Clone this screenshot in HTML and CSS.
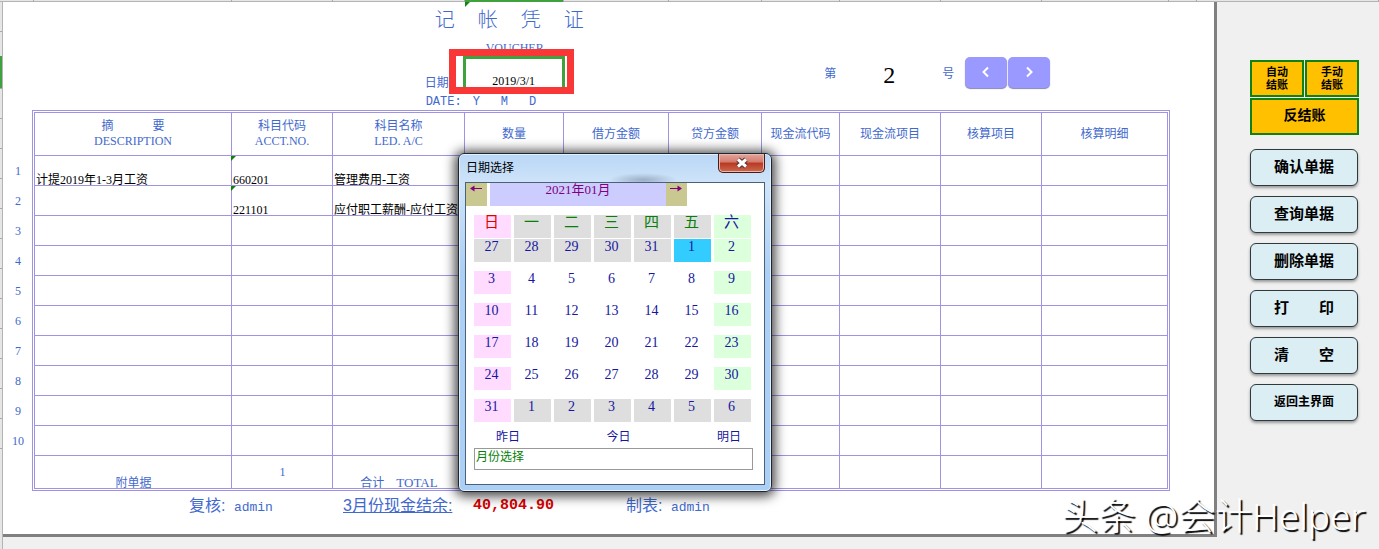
FILE: index.html
```
<!DOCTYPE html>
<html lang="zh-CN">
<head>
<meta charset="utf-8">
<title>记帐凭证</title>
<link rel="stylesheet" href="styles.css">
</head>
<body>
<div class="colstrip"><i class="c1"></i><i class="c2"></i><i class="c3"></i><i class="c4"></i><i class="c5 active"></i><i class="c6"></i><i class="c7"></i><i class="c8"></i><i class="c9"></i><i class="c10"></i><i class="c11"></i><i class="c12"></i><i class="c13"></i></div>
<div class="workspace">
  <div class="rowstrip"><i></i><i></i><i class="active"></i><i></i><i></i><i></i><i></i><i></i><i></i><i></i><i></i><i></i><i></i><i></i><i></i></div>
  <main class="sheet">
    <header class="head">
      <div class="title-block">
        <h1 class="title"><span>记</span><span>帐</span><span>凭</span><span>证</span></h1>
        <div class="subtitle">VOUCHER</div>
        <div class="date-row">
          <label for="vdate">日期</label>
          <div class="red-frame"><input id="vdate" class="date-input" type="text" value="2019/3/1"></div>
        </div>
        <div class="date-parts"><span>DATE:</span><span>Y</span><span>M</span><span>D</span></div>
      </div>
      <div class="number-nav">
        <span>第</span><span class="number">2</span><span class="hao">号</span>
        <button class="nav" aria-label="上一张"><svg viewBox="0 0 8 12" width="8" height="12"><path d="M6 1.5 1.5 6 6 10.5"/></svg></button>
        <button class="nav" aria-label="下一张"><svg viewBox="0 0 8 12" width="8" height="12"><path d="M2 1.5 6.5 6 2 10.5"/></svg></button>
      </div>
    </header>
    <div class="ledger">
      <ol class="rownums"><li>1</li><li>2</li><li>3</li><li>4</li><li>5</li><li>6</li><li>7</li><li>8</li><li>9</li><li>10</li></ol>
      <div class="frame">
        <table class="grid">
          <colgroup><col class="w-desc"><col class="w-acct"><col class="w-name"><col class="w-qty"><col class="w-debit"><col class="w-credit"><col class="w-cfcode"><col class="w-cfitem"><col class="w-item"><col></colgroup>
          <thead><tr>
            <th><span class="spread"><span>摘</span><span>要</span></span><span class="en">DESCRIPTION</span></th>
            <th>科目代码<span class="en">ACCT.NO.</span></th>
            <th>科目名称<span class="en">LED. A/C</span></th>
            <th>数量</th><th>借方金额</th><th>贷方金额</th><th>现金流代码</th><th>现金流项目</th><th>核算项目</th><th>核算明细</th>
          </tr></thead>
          <tbody>
            <tr><td>计提2019年1-3月工资</td><td class="flag">660201</td><td>管理费用-工资</td><td></td><td></td><td></td><td></td><td></td><td></td><td></td></tr>
            <tr><td></td><td class="flag">221101</td><td>应付职工薪酬-应付工资</td><td></td><td></td><td></td><td></td><td></td><td></td><td></td></tr>
            <tr><td></td><td></td><td></td><td></td><td></td><td></td><td></td><td></td><td></td><td></td></tr>
            <tr><td></td><td></td><td></td><td></td><td></td><td></td><td></td><td></td><td></td><td></td></tr>
            <tr><td></td><td></td><td></td><td></td><td></td><td></td><td></td><td></td><td></td><td></td></tr>
            <tr><td></td><td></td><td></td><td></td><td></td><td></td><td></td><td></td><td></td><td></td></tr>
            <tr><td></td><td></td><td></td><td></td><td></td><td></td><td></td><td></td><td></td><td></td></tr>
            <tr><td></td><td></td><td></td><td></td><td></td><td></td><td></td><td></td><td></td><td></td></tr>
            <tr><td></td><td></td><td></td><td></td><td></td><td></td><td></td><td></td><td></td><td></td></tr>
            <tr><td></td><td></td><td></td><td></td><td></td><td></td><td></td><td></td><td></td><td></td></tr>
          </tbody>
          <tfoot><tr><td>附单据</td><td class="count">1</td><td>合计 <span class="total">TOTAL</span></td><td></td><td></td><td></td><td></td><td></td><td></td><td></td></tr></tfoot>
        </table>
      </div>
    </div>
    <footer class="foot">
      <span class="reviewer">复核: <span class="mono">admin</span></span>
      <a class="balance" href="#">3月份现金结余:</a>
      <strong class="amount">40,804.90</strong>
      <span class="maker">制表: <span class="mono">admin</span></span>
    </footer>
  </main>
  <aside class="side">
    <div class="closing">
      <button class="close-btn">自动<br>结账</button><button class="close-btn">手动<br>结账</button>
      <button class="close-btn wide">反结账</button>
    </div>
    <button class="action">确认单据</button>
    <button class="action">查询单据</button>
    <button class="action">删除单据</button>
    <button class="action split"><span>打</span><span>印</span></button>
    <button class="action split"><span>清</span><span>空</span></button>
    <button class="action small">返回主界面</button>
  </aside>
</div>

<section class="dialog" role="dialog" aria-labelledby="dlg-title">
  <div class="titlebar">
    <h2 id="dlg-title">日期选择</h2>
    <button class="dialog-close" aria-label="关闭"><svg viewBox="0 0 14 12" width="14" height="12"><path class="x-edge" d="M3 2.5 11 9.5M11 2.5 3 9.5"/><path class="x-fill" d="M3 2.5 11 9.5M11 2.5 3 9.5"/></svg></button>
  </div>
  <div class="panel">
    <div class="month"><button class="arrow" aria-label="上月"><svg viewBox="0 0 12 8" width="12" height="8"><path d="M12 3.5H1"/><path class="tip" d="M4.5 .5V6.5L0 3.5Z"/></svg></button><div class="month-name">2021年01月</div><button class="arrow" aria-label="下月"><svg viewBox="0 0 12 8" width="12" height="8"><path d="M0 3.5H11"/><path class="tip" d="M7.5 .5V6.5L12 3.5Z"/></svg></button></div>
    <div class="week names"><span class="sun">日</span><span class="out">一</span><span class="out">二</span><span class="out">三</span><span class="out">四</span><span class="out">五</span><span class="sat">六</span></div>
    <div class="days">
      <div class="week"><button class="out">27</button><button class="out">28</button><button class="out">29</button><button class="out">30</button><button class="out">31</button><button class="now">1</button><button class="sat">2</button></div>
      <div class="week"><button class="sun">3</button><button>4</button><button>5</button><button>6</button><button>7</button><button>8</button><button class="sat">9</button></div>
      <div class="week"><button class="sun">10</button><button>11</button><button>12</button><button>13</button><button>14</button><button>15</button><button class="sat">16</button></div>
      <div class="week"><button class="sun">17</button><button>18</button><button>19</button><button>20</button><button>21</button><button>22</button><button class="sat">23</button></div>
      <div class="week"><button class="sun">24</button><button>25</button><button>26</button><button>27</button><button>28</button><button>29</button><button class="sat">30</button></div>
      <div class="week"><button class="sun">31</button><button class="out">1</button><button class="out">2</button><button class="out">3</button><button class="out">4</button><button class="out">5</button><button class="out">6</button></div>
    </div>
    <div class="quick"><button>昨日</button><button>今日</button><button>明日</button></div>
    <button class="pick-month">月份选择</button>
  </div>
</section>
<div class="watermark">头条 @会计Helper</div>
</body>
</html>
```
FILE: styles.css
```
* { box-sizing: border-box; }
:root {
  --line: #9f93e3;
  --ink: #3f69cd;
  --serif: "Liberation Serif", "Noto Sans CJK SC", serif;
}
body {
  margin: 0;
  min-height: 100vh;
  display: flex;
  flex-direction: column;
  position: relative;
  overflow: hidden;
  background: #f0f0f0;
  color: #000;
  font: 12px/14px "Liberation Sans", "Noto Sans CJK SC", sans-serif;
}
button {
  margin: 0;
  padding: 0;
  border: 0;
  background: none;
  font: inherit;
  color: inherit;
  cursor: pointer;
}
h1, h2 { margin: 0; font-weight: normal; }

/* sheet rulers */
.colstrip {
  display: grid;
  grid-template-columns: 34fr 198fr 101fr 132fr 99fr 105fr 93fr 78fr 101fr 101fr 127fr 28fr 182fr;
  height: 2px;
  background: #e6e6e6;
  border-bottom: 1px solid #b4b4b4;
}
.colstrip i { border-right: 1px solid #aaa; }
.colstrip .active { height: 2px; background: #3fa23f; position: relative; }
.colstrip .active::after {
  content: "";
  position: absolute;
  left: 0;
  top: 2px;
  border-top: 5px solid #168516;
  border-right: 5px solid transparent;
}
.workspace { flex: 1; display: flex; align-items: flex-start; }
.rowstrip {
  align-self: stretch;
  flex: 0 0 2px;
  background: #e6e6e6;
  border-right: 1px solid #b4b4b4;
}
.rowstrip i { display: block; height: 30px; border-bottom: 1px solid #aaa; }
.rowstrip .active { width: 2px; height: 33px; background: #3fa23f; margin-top: -6px; }

.sheet {
  flex: 1;
  background: #fff;
  border-right: 3px solid #808080;
  border-bottom: 3px solid #808080;
  padding-bottom: 15px;
}

/* voucher heading */
.head {
  display: grid;
  grid-template-columns: 422fr 395fr 395fr;
  height: 108px;
  color: var(--ink);
}
.title-block { grid-column: 2; padding-top: 6px; }
.title {
  display: flex;
  gap: 23px;
  padding-left: 10px;
  font-size: 20px;
  line-height: 24px;
  font-weight: 300;
}
.subtitle { padding: 9px 0 0 61px; font-family: var(--serif); height: 17px; line-height: 14px; }
.date-row { display: flex; height: 45px; }
.date-row label { width: 24px; padding-top: 27px; white-space: nowrap; }
.red-frame {
  width: 125px;
  border: 7px solid #fa3737;
  background: #fff;
  padding: 0 2px 0 7px;
  display: flex;
}
.date-input {
  width: 102px;
  min-width: 0;
  height: 31px;
  border: 3px solid #3fa23f;
  border-bottom: 0;
  padding: 16px 0 0;
  background: #fff;
  text-align: center;
  font: 12px/14px var(--serif);
}
.date-parts {
  display: flex;
  gap: 21px;
  padding: 1px 0 0 1px;
  font: 12px/14px "Liberation Mono", monospace;
}
.date-parts span:first-child { margin-right: -10px; }
.number-nav { display: flex; align-items: flex-start; padding: 55px 0 0 5px; line-height: 34px; }
.number { width: 106px; text-align: center; font: 24px/36px var(--serif); color: #000; }
.hao { width: 23px; }
.nav {
  width: 42px;
  height: 31px;
  margin-right: 1px;
  border-radius: 5px;
  background: #9999ff;
  box-shadow: 0 1px 1px #8585b5;
}
.nav svg { display: block; margin: -1px auto 0; }
.nav path { fill: none; stroke: #fff; stroke-width: 2; }

/* ledger */
.ledger { display: flex; color: var(--ink); }
.rownums {
  flex: 0 0 30px;
  margin: 0 -1px 0 0;
  padding: 46px 0 0;
  list-style: none;
  text-align: center;
  font: 12px/30px var(--serif);
}
.frame { flex: 1; border: 3px double var(--line); margin-right: 44px; }
.grid { width: 100%; table-layout: fixed; border-collapse: separate; border-spacing: 0; }
.w-desc { width: 197px; }
.w-acct, .w-cfitem, .w-item { width: 101px; }
.w-name { width: 132px; }
.w-qty { width: 99px; }
.w-debit { width: 105px; }
.w-credit { width: 93px; }
.w-cfcode { width: 78px; }
.grid th, .grid td {
  padding: 0;
  border-right: 1px solid var(--line);
  border-bottom: 1px solid var(--line);
}
.grid th:last-child, .grid td:last-child { border-right: 0; }
.grid th { height: 43px; font-weight: normal; line-height: 15px; }
.en { display: block; font-family: var(--serif); font-size: 12px; }
.spread { display: flex; justify-content: center; gap: 39px; }
.grid td {
  height: 30px;
  padding-left: 1px;
  vertical-align: bottom;
  line-height: 10px;
  font-family: var(--serif);
  white-space: nowrap;
}
.grid tbody td { color: #000; }
.flag { position: relative; }
.flag::before {
  content: "";
  position: absolute;
  left: -1px;
  top: 0;
  border-top: 5px solid #108010;
  border-right: 5px solid transparent;
}
.grid tfoot td { height: 32px; border-bottom: 0; text-align: center; }
.grid tfoot .count { vertical-align: middle; }
.total { margin-left: 9px; font-size: 13px; }

.foot {
  display: flex;
  padding: 4px 0 0 186px;
  font-size: 16px;
  line-height: 22px;
  color: var(--ink);
}
.mono { margin-left: 4px; font: 13px/22px "Liberation Mono", monospace; }
.reviewer { width: 154px; }
.balance { width: 130px; color: inherit; }
.amount { width: 153px; font: bold 15px/22px "Liberation Mono", monospace; color: #d80000; }

/* side commands */
.side { flex: 0 0 162px; padding: 58px 20px 0 33px; }
.closing { display: grid; grid-template-columns: 1fr 1fr; gap: 1px; margin-bottom: 14px; }
.close-btn {
  height: 37px;
  border: 2px solid #108010;
  background: #ffc000;
  font-size: 11px;
  font-weight: bold;
  line-height: 13px;
}
.wide { grid-column: 1 / 3; padding-bottom: 2px; font-size: 14px; }
.action {
  display: block;
  width: 108px;
  height: 37px;
  margin-bottom: 10px;
  padding-bottom: 2px;
  border: 1px solid #30393c;
  border-radius: 6px;
  background: #daeef3;
  box-shadow: 0 2px 3px #999;
  font-size: 15px;
  font-weight: bold;
  line-height: 20px;
}
.split span + span { margin-left: 30px; }
.small { font-size: 12px; }

/* calendar dialog */
.dialog {
  position: absolute;
  left: 458px;
  top: 153px;
  width: 314px;
  padding: 0 6px 6px;
  border: 1px solid #1d2733;
  border-radius: 6px;
  background: radial-gradient(ellipse 34px 7px at 184px 26px, #9aaec4, transparent), linear-gradient(#b9d7f6, #cfe4f9 30px, #abcff5 120px);
  box-shadow: inset 0 0 0 1px #e4f1fd, 0 1px 12px 3px rgba(0, 0, 0, .75);
}
.titlebar { display: flex; justify-content: space-between; height: 28px; }
.titlebar h2 { padding: 7px 0 0 1px; font-size: 12px; line-height: 14px; }
.dialog-close {
  width: 47px;
  height: 19px;
  border: 1px solid #4a1a16;
  border-top: 0;
  border-radius: 0 0 5px 5px;
  background: linear-gradient(#e3a89f, #d3796b 45%, #b83822 50%, #cd6a50);
  box-shadow: inset 0 0 0 1px #e9b9b0;
}
.dialog-close svg { display: block; margin: 0 auto; }
.x-edge { stroke: #543030; stroke-width: 5; }
.x-fill { stroke: #fff; stroke-width: 3; }
.panel {
  border: 1px solid #4c6178;
  background: #fff;
  color: #1616a0;
  height: 303px;
  font-family: "Liberation Serif", "Noto Sans CJK SC", serif;
}
.month { display: flex; color: #800080; line-height: 14px; text-align: center; }
.arrow { display: flex; align-items: flex-start; width: 21px; height: 23px; background: #c8c890; }
.arrow svg { display: block; margin: 2px auto auto 4px; }
.arrow path { fill: none; stroke: #800080; }
.arrow .tip { fill: #800080; stroke: none; }
.month-name { width: 176px; margin-left: 3px; background: #ccccff; font-size: 13px; }
.week { display: grid; grid-template-columns: repeat(7, 37px); gap: 3px; padding-left: 8px; }
.week > * { height: 23px; text-align: center; font-size: 14px; line-height: 15px; }
.week button { padding: 0 2px 8px 0; }
.names { margin: 9px 0 1px; }
.names span { padding-right: 2px; color: #078007; font-size: 15px; }
.names .sun { color: #e00000; }
.names .sat { color: #1616a0; }
.days { display: grid; gap: 9px; }
.sun { background: #ffdcff; }
.sat { background: #dcffdc; }
.out { background: #dedede; }
.now { background: #33ccff; }
.quick { display: flex; justify-content: space-between; padding: 8px 23px 0 30px; line-height: 14px; }
.pick-month {
  display: block;
  width: 279px;
  height: 22px;
  margin: 4px 0 0 8px;
  padding: 0 0 4px 1px;
  border: 1px solid #999;
  text-align: left;
  color: #078007;
}

.watermark {
  position: absolute;
  right: 14px;
  bottom: 10px;
  font: 37px/46px "Noto Sans", "Noto Sans CJK SC", sans-serif;
  font-weight: 300;
  color: #fff;
  text-shadow: 2px 2px 1px #000;
}
```
